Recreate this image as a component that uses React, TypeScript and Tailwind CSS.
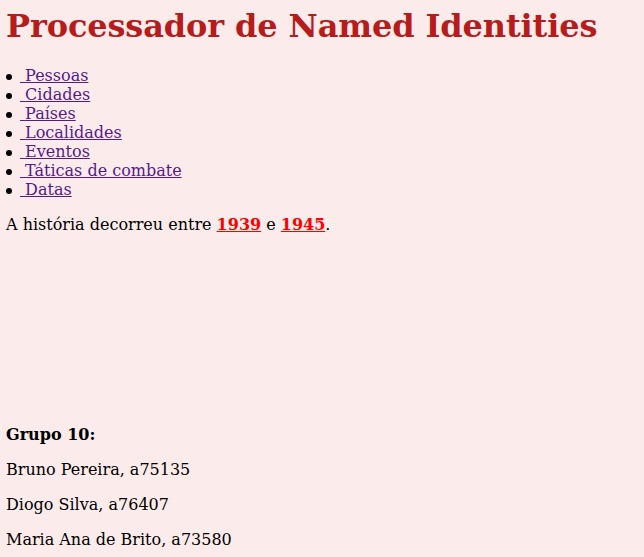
const LINKS = ['Pessoas', 'Cidades', 'Países', 'Localidades', 'Eventos', 'Táticas de combate', 'Datas'];

const MEMBERS = ['Bruno Pereira, a75135', 'Diogo Silva, a76407', 'Maria Ana de Brito, a73580'];

export default function App() {
  return (
    <div className="min-h-screen bg-[#fbeceb] px-[6px] pt-[7px] pb-2 font-['DejaVu_Serif',serif] text-[16px] leading-[normal] text-black">
      <h1 className="mb-[21px] text-[32px] font-bold leading-[normal] tracking-[-0.13px] text-[#b71c1c]">
        Processador de Named Identities
      </h1>

      {/* menu */}
      <ul className="list-none">
        {LINKS.map((l) => (
          <li key={l}>
            <span className="mr-[8px] inline-block size-[6px] rounded-full bg-black align-middle" />
            <a href="#" className="text-[#551a8b] underline">
              {'\u00a0'}
              {l}
            </a>
          </li>
        ))}
      </ul>

      <p className="mt-4">
        A história decorreu entre{' '}
        <a href="#" className="font-bold text-[#ff0000] underline">
          1939
        </a>{' '}
        e{' '}
        <a href="#" className="font-bold text-[#ff0000] underline">
          1945
        </a>
        .
      </p>

      <p className="mt-[191px] font-bold">Grupo 10:</p>
      {MEMBERS.map((m) => (
        <p key={m} className="mt-4">
          {m}
        </p>
      ))}
      <div className="h-4" />
    </div>
  );
}
